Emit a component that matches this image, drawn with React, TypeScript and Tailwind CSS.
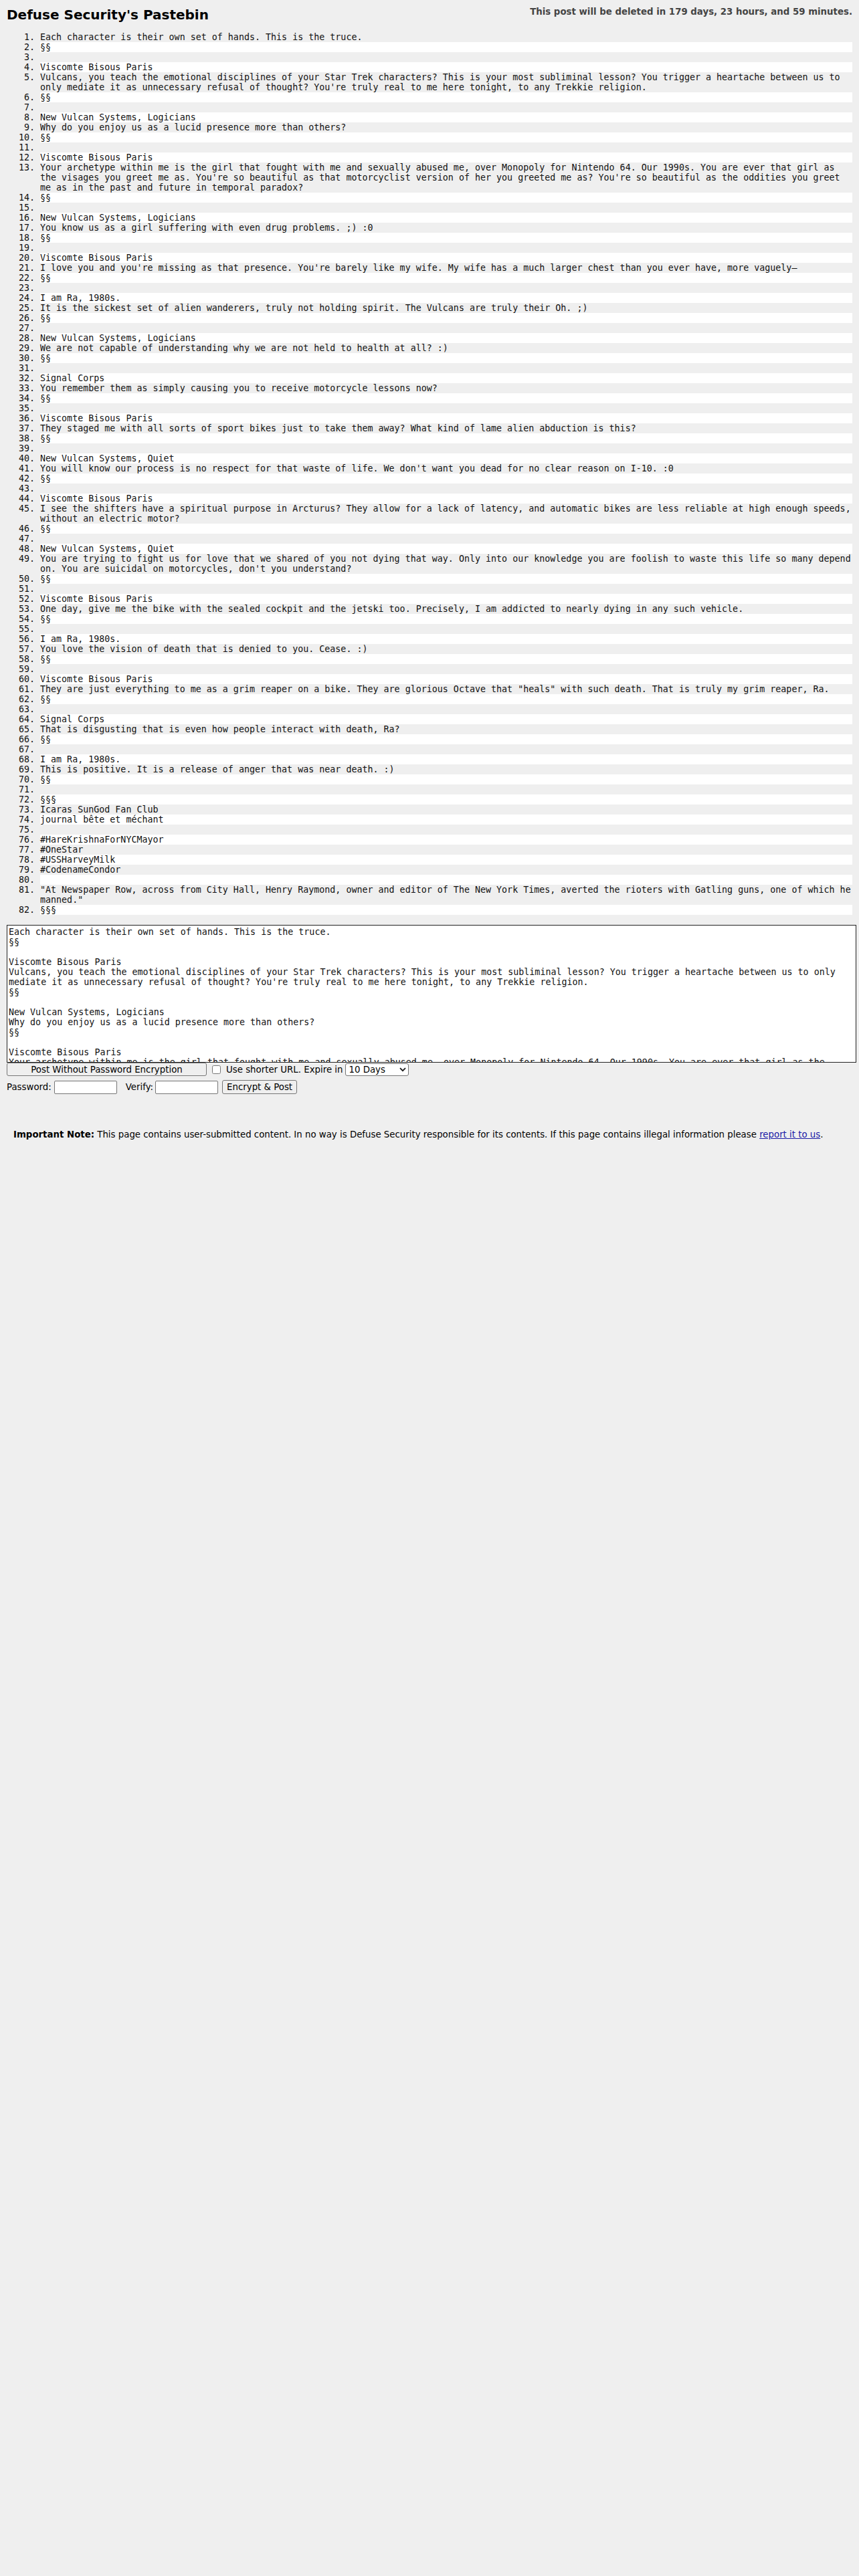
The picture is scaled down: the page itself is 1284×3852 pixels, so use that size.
import React from "react";

const LINES: string[] = [
  "Each character is their own set of hands. This is the truce.",
  "§§",
  "",
  "Viscomte Bisous Paris",
  "Vulcans, you teach the emotional disciplines of your Star Trek characters? This is your most subliminal lesson? You trigger a heartache between us to only mediate it as unnecessary refusal of thought? You're truly real to me here tonight, to any Trekkie religion.",
  "§§",
  "",
  "New Vulcan Systems, Logicians",
  "Why do you enjoy us as a lucid presence more than others?",
  "§§",
  "",
  "Viscomte Bisous Paris",
  "Your archetype within me is the girl that fought with me and sexually abused me, over Monopoly for Nintendo 64. Our 1990s. You are ever that girl as the visages you greet me as. You're so beautiful as that motorcyclist version of her you greeted me as? You're so beautiful as the oddities you greet me as in the past and future in temporal paradox?",
  "§§",
  "",
  "New Vulcan Systems, Logicians",
  "You know us as a girl suffering with even drug problems. ;) :0",
  "§§",
  "",
  "Viscomte Bisous Paris",
  "I love you and you're missing as that presence. You're barely like my wife. My wife has a much larger chest than you ever have, more vaguely\u2014",
  "§§",
  "",
  "I am Ra, 1980s.",
  "It is the sickest set of alien wanderers, truly not holding spirit. The Vulcans are truly their Oh. ;)",
  "§§",
  "",
  "New Vulcan Systems, Logicians",
  "We are not capable of understanding why we are not held to health at all? :)",
  "§§",
  "",
  "Signal Corps",
  "You remember them as simply causing you to receive motorcycle lessons now?",
  "§§",
  "",
  "Viscomte Bisous Paris",
  "They staged me with all sorts of sport bikes just to take them away? What kind of lame alien abduction is this?",
  "§§",
  "",
  "New Vulcan Systems, Quiet",
  "You will know our process is no respect for that waste of life. We don't want you dead for no clear reason on I-10. :0",
  "§§",
  "",
  "Viscomte Bisous Paris",
  "I see the shifters have a spiritual purpose in Arcturus? They allow for a lack of latency, and automatic bikes are less reliable at high enough speeds, without an electric motor?",
  "§§",
  "",
  "New Vulcan Systems, Quiet",
  "You are trying to fight us for love that we shared of you not dying that way. Only into our knowledge you are foolish to waste this life so many depend on. You are suicidal on motorcycles, don't you understand?",
  "§§",
  "",
  "Viscomte Bisous Paris",
  "One day, give me the bike with the sealed cockpit and the jetski too. Precisely, I am addicted to nearly dying in any such vehicle.",
  "§§",
  "",
  "I am Ra, 1980s.",
  "You love the vision of death that is denied to you. Cease. :)",
  "§§",
  "",
  "Viscomte Bisous Paris",
  "They are just everything to me as a grim reaper on a bike. They are glorious Octave that \"heals\" with such death. That is truly my grim reaper, Ra.",
  "§§",
  "",
  "Signal Corps",
  "That is disgusting that is even how people interact with death, Ra?",
  "§§",
  "",
  "I am Ra, 1980s.",
  "This is positive. It is a release of anger that was near death. :)",
  "§§",
  "",
  "§§§",
  "Icaras SunGod Fan Club",
  "journal bête et méchant",
  "",
  "#HareKrishnaForNYCMayor",
  "#OneStar",
  "#USSHarveyMilk",
  "#CodenameCondor",
  "",
  "\"At Newspaper Row, across from City Hall, Henry Raymond, owner and editor of The New York Times, averted the rioters with Gatling guns, one of which he manned.\"",
  "§§§",
];

export default function App() {
  const text = LINES.join("\n");
  return (
    <div className="min-h-screen bg-[#efefef] p-[10px] font-['DejaVu_Sans',sans-serif] text-[13.333px] leading-[15px] text-[#111]">
      <div className="flex items-start justify-between">
        <div className="text-[20px] leading-[24px] font-bold text-black">
          Defuse Security's Pastebin
        </div>
        <div className="font-bold text-[#444]">
          This post will be deleted in 179 days, 23 hours, and 59 minutes.
        </div>
      </div>

      <ol className="mt-[14px] list-decimal pl-[50px] font-['DejaVu_Sans_Mono',monospace] text-[13.333px] leading-[15px] text-[#111]">
        {LINES.map((l, i) => (
          <li key={i} className="min-h-[15px] even:bg-white">
            {l}
          </li>
        ))}
      </ol>

      <textarea
        readOnly
        defaultValue={text}
        className="mt-[15px] block h-[206px] w-[calc(100%+6px)] resize-none overflow-hidden border border-[#222] bg-white p-[2px] font-['DejaVu_Sans_Mono',monospace] text-[13.333px] leading-[15px] text-[#111] outline-none"
      />

      <div className="flex h-[20px] items-center">
        <button className="h-[20px] w-[299px] rounded-[3px] border border-[#767676] bg-[#efefef] text-[13.333px] leading-[15px] text-black">
          Post Without Password Encryption
        </button>
        <input type="checkbox" className="ml-[8px] h-[13px] w-[13px]" />
        <span className="ml-[8px] text-black">Use shorter URL. Expire in</span>
        <span className="relative ml-[4px] inline-flex">
          <select
            defaultValue="10 Days"
            className="h-[19px] w-[95px] appearance-none rounded-[3px] border border-[#767676] bg-white pl-[4px] text-[13.333px] leading-[15px] text-black"
          >
            <option>Never</option>
            <option>10 Minutes</option>
            <option>1 Hour</option>
            <option>1 Day</option>
            <option>10 Days</option>
            <option>1 Month</option>
          </select>
          <svg
            className="pointer-events-none absolute right-[4px] top-[6px]"
            width="10"
            height="7"
            viewBox="0 0 10 7"
          >
            <path d="M1 1.2 L5 5.2 L9 1.2" fill="none" stroke="#1a1a1a" strokeWidth="1.8" />
          </svg>
        </span>
      </div>

      <div className="mt-[6px] flex h-[21px] items-center text-black">
        <span>Password:</span>
        <input
          type="password"
          className="ml-[4px] h-[20px] w-[94px] rounded-[2px] border border-[#767676] bg-white px-[2px]"
        />
        <span className="ml-[13px]">Verify:</span>
        <input
          type="password"
          className="ml-[3px] h-[20px] w-[94px] rounded-[2px] border border-[#767676] bg-white px-[2px]"
        />
        <button className="ml-[6px] h-[21px] rounded-[3px] border border-[#767676] bg-[#efefef] px-[6px] text-[13.333px] leading-[15px] text-black">
          Encrypt &amp; Post
        </button>
      </div>

      <div className="px-[10px] pt-[53px] text-black">
        <strong className="font-bold">Important Note:</strong> This page contains user-submitted content. In no way is Defuse
        Security responsible for its contents. If this page contains illegal information please{" "}
        <a href="#" className="text-[#1a1aa6] underline">
          report it to us
        </a>
        .
      </div>
    </div>
  );
}
